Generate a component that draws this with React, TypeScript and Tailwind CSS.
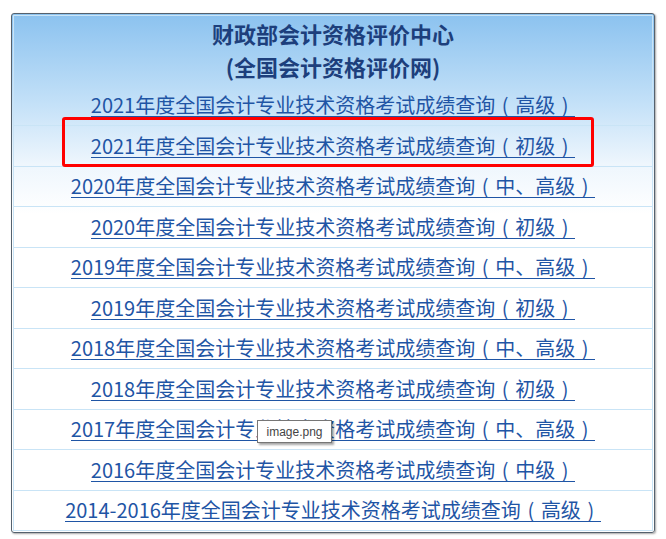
import React from "react";

const rows: [string, string][] = [
  ["2021年度全国会计专业技术资格考试成绩查询", "高级"],
  ["2021年度全国会计专业技术资格考试成绩查询", "初级"],
  ["2020年度全国会计专业技术资格考试成绩查询", "中、高级"],
  ["2020年度全国会计专业技术资格考试成绩查询", "初级"],
  ["2019年度全国会计专业技术资格考试成绩查询", "中、高级"],
  ["2019年度全国会计专业技术资格考试成绩查询", "初级"],
  ["2018年度全国会计专业技术资格考试成绩查询", "中、高级"],
  ["2018年度全国会计专业技术资格考试成绩查询", "初级"],
  ["2017年度全国会计专业技术资格考试成绩查询", "中、高级"],
  ["2016年度全国会计专业技术资格考试成绩查询", "中级"],
  ["2014-2016年度全国会计专业技术资格考试成绩查询", "高级"],
];

export default function App() {
  return (
    <div
      className="relative w-[666px] h-[539px] bg-white"
      style={{ fontFamily: '"Noto Sans CJK SC", "Noto Sans", sans-serif' }}
    >
      <div className="absolute left-[11px] top-[13px] w-[644px] h-[520px] border border-[#55616d] rounded-[3px] p-px bg-[linear-gradient(to_bottom,#8bc2ef_0px,#c4e1f8_90px,#eef6fd_150px,#ffffff_200px)] shadow-[1px_1px_2px_rgba(0,0,0,0.35)]">
        <div className="h-full w-full border border-[#c9e4f6] flex flex-col">
          <div className="h-[69px] pt-[1px] flex flex-col items-center text-[22px] leading-[33px] font-bold text-[#1d3f7c]">
            <div>财政部会计资格评价中心</div>
            <div>(全国会计资格评价网)</div>
          </div>
          {rows.map(([main, level], i) => (
            <div
              key={i}
              className={
                i === 0
                  ? "h-[40.8px] flex items-center justify-center"
                  : "h-[40.8px] flex items-center justify-center border-t border-[#c9e4f6]"
              }
            >
              <a
                href="#"
                className="inline-block text-[20px] leading-[22px] pt-[1px] text-[#1f55a5] border-b border-[#1f55a5] whitespace-nowrap no-underline"
              >
                {main}
                <span className="inline-block w-[20px] text-center">(</span>
                {level}
                <span className="inline-block w-[20px] text-center">)</span>
              </a>
            </div>
          ))}
        </div>
      </div>
      <div className="absolute left-[62px] top-[117px] w-[532px] h-[50px] border-[3px] border-[#ff0000] rounded-[3px]" />
      <div
        className="absolute left-[257px] top-[420px] w-[75px] h-[23px] bg-white border border-[#767676] shadow-[2px_2px_2px_rgba(0,0,0,0.35)] flex items-center justify-center text-[12px] text-[#444]"
        style={{ fontFamily: '"Liberation Sans", Arial, sans-serif' }}
      >
        image.png
      </div>
    </div>
  );
}
